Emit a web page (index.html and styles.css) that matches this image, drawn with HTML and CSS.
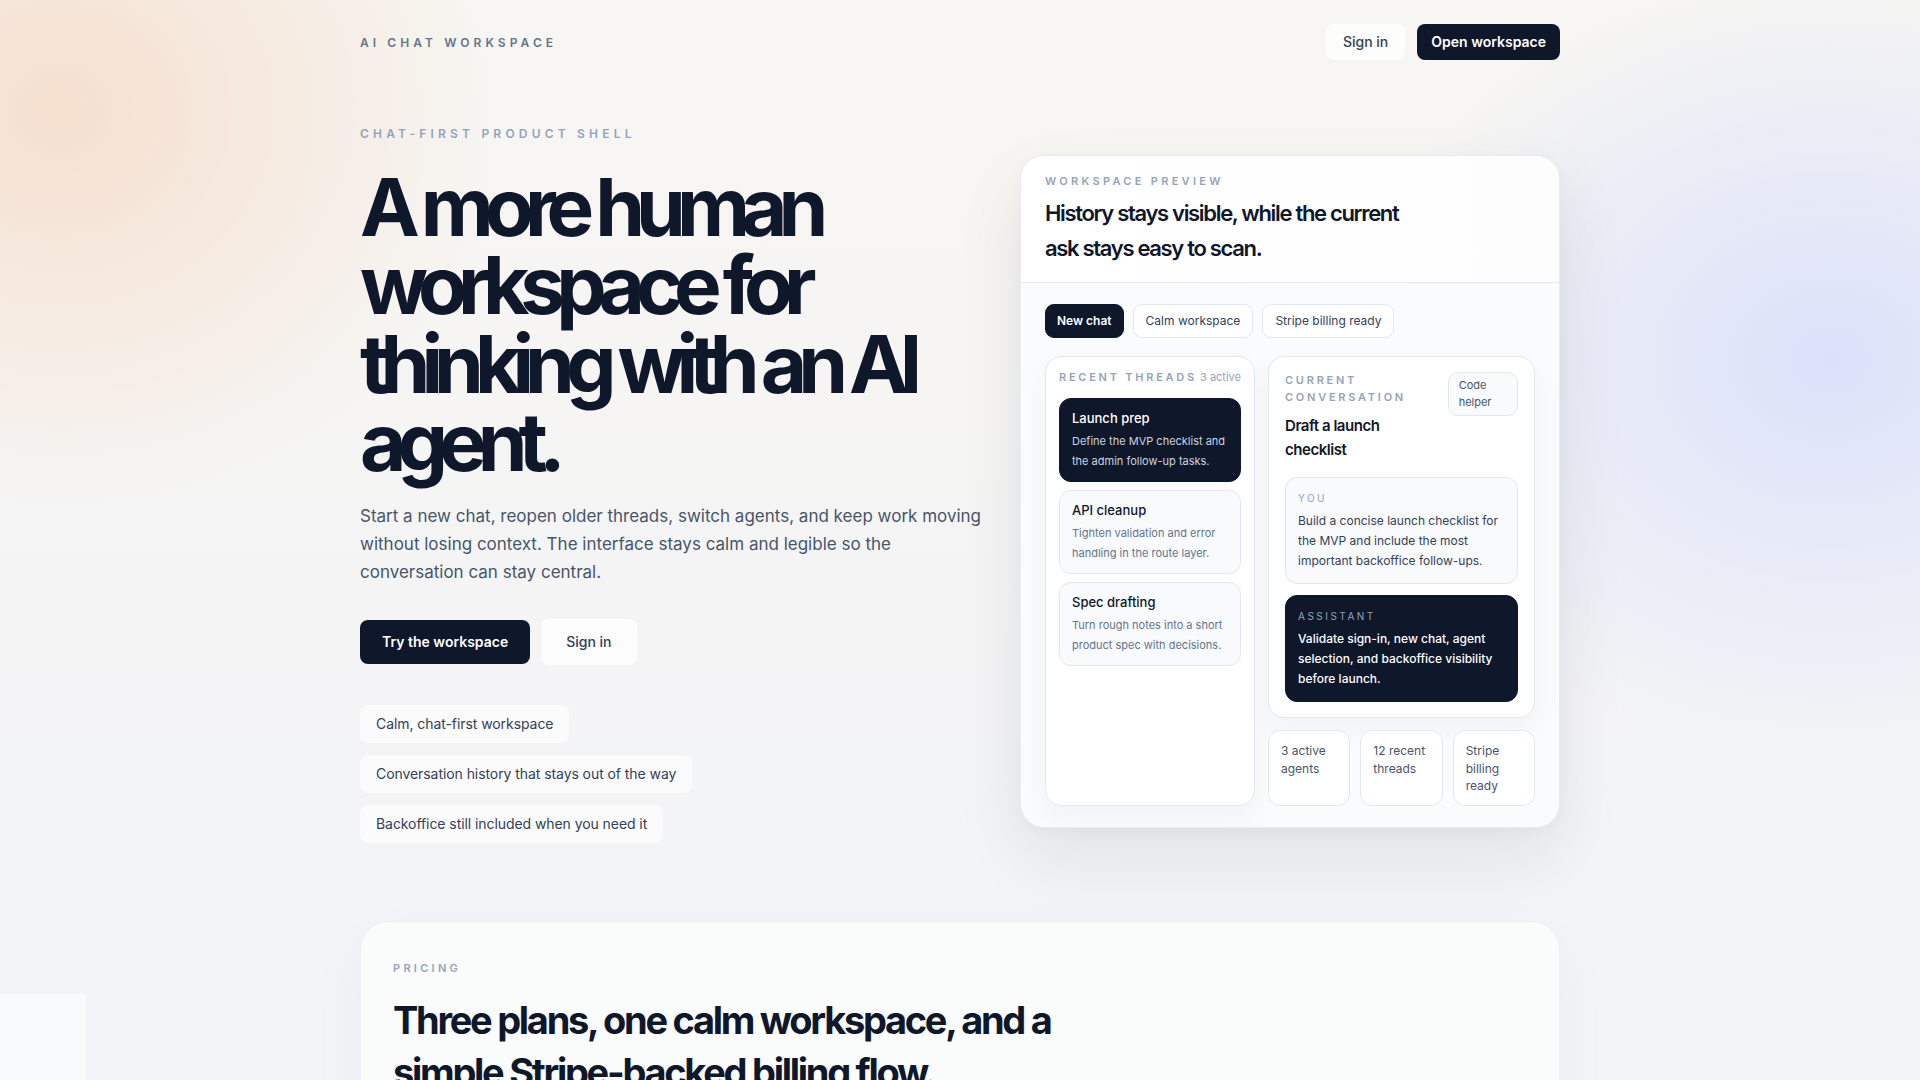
FILE: index.html
```html
<!DOCTYPE html>
<html lang="en">
<head>
<meta charset="utf-8">
<title>AI Chat Workspace</title>
<link rel="stylesheet" href="styles.css">
</head>
<body>
<div class="page">
  <header class="nav">
    <div class="brand">AI CHAT WORKSPACE</div>
    <div class="nav-actions">
      <a class="btn btn-ghost" href="#">Sign in</a>
      <a class="btn btn-dark" href="#">Open workspace</a>
    </div>
  </header>

  <section class="hero">
    <div class="hero-copy">
      <p class="eyebrow">CHAT-FIRST PRODUCT SHELL</p>
      <h1 class="hero-title">A more human workspace for thinking with an AI agent.</h1>
      <p class="lead">Start a new chat, reopen older threads, switch agents, and keep work moving without losing context. The interface stays calm and legible so the conversation can stay central.</p>
      <div class="cta">
        <a class="btn btn-dark btn-lg" href="#">Try the workspace</a>
        <a class="btn btn-ghost btn-lg" href="#">Sign in</a>
      </div>
      <ul class="pills">
        <li class="pill">Calm, chat-first workspace</li>
        <li class="pill">Conversation history that stays out of the way</li>
        <li class="pill">Backoffice still included when you need it</li>
      </ul>
    </div>

    <div class="preview-col">
      <div class="preview">
        <div class="preview-head">
          <p class="micro">WORKSPACE PREVIEW</p>
          <h2 class="preview-title">History stays visible, while the current ask stays easy to scan.</h2>
        </div>
        <div class="preview-body">
          <div class="tabs">
            <span class="tab tab-active">New chat</span>
            <span class="tab">Calm workspace</span>
            <span class="tab">Stripe billing ready</span>
          </div>
          <div class="panels">
            <div class="threads">
              <div class="threads-head">
                <span class="micro">RECENT THREADS</span>
                <span class="threads-count">3 active</span>
              </div>
              <div class="thread thread-active">
                <div class="thread-title">Launch prep</div>
                <div class="thread-desc">Define the MVP checklist and the admin follow-up tasks.</div>
              </div>
              <div class="thread">
                <div class="thread-title">API cleanup</div>
                <div class="thread-desc">Tighten validation and error handling in the route layer.</div>
              </div>
              <div class="thread">
                <div class="thread-title">Spec drafting</div>
                <div class="thread-desc">Turn rough notes into a short product spec with decisions.</div>
              </div>
            </div>
            <div class="convo-col">
              <div class="convo">
                <div class="convo-head">
                  <div class="convo-heading">
                    <p class="micro">CURRENT CONVERSATION</p>
                    <h3 class="convo-title">Draft a launch checklist</h3>
                  </div>
                  <span class="badge">Code helper</span>
                </div>
                <div class="msg msg-user">
                  <div class="msg-label">YOU</div>
                  <p class="msg-text">Build a concise launch checklist for the MVP and include the most important backoffice follow-ups.</p>
                </div>
                <div class="msg msg-bot">
                  <div class="msg-label">ASSISTANT</div>
                  <p class="msg-text">Validate sign-in, new chat, agent selection, and backoffice visibility before launch.</p>
                </div>
              </div>
              <div class="stats">
                <div class="stat">3 active agents</div>
                <div class="stat">12 recent threads</div>
                <div class="stat">Stripe billing ready</div>
              </div>
            </div>
          </div>
        </div>
      </div>
    </div>
  </section>

  <section class="pricing">
    <p class="eyebrow eyebrow-sm">PRICING</p>
    <h2 class="pricing-title">Three plans, one calm workspace, and a simple Stripe-backed billing flow.</h2>
    <p class="pricing-lead">Start free, upgrade when the team needs more agents, and manage billing without leaving the workspace.</p>
  </section>
</div>
<div class="corner"></div>
</body>
</html>
```

FILE: styles.css
```css
* { box-sizing: border-box; }

html, body { margin: 0; padding: 0; }

body {
  font-family: Inter, "Noto Sans", "Liberation Sans", sans-serif;
  color: #0f172a;
  min-height: 100vh;
  background:
    radial-gradient(440px 400px at 60px 110px, rgba(245, 221, 203, 0.9), rgba(245, 221, 203, 0) 100%),
    radial-gradient(480px 400px at 1830px 360px, rgba(219, 225, 250, 1), rgba(219, 225, 250, 0) 100%),
    linear-gradient(180deg, #f7f6f2 0px, #f6f5f3 300px, #f3f4f7 900px, #f3f4f7 100%);
  background-repeat: no-repeat;
}

a { text-decoration: none; color: inherit; }

.page {
  width: 1200px;
  margin: 0 auto;
  padding-bottom: 120px;
}

/* NAV */
.nav {
  display: flex;
  align-items: center;
  justify-content: space-between;
  padding-top: 24px;
}

.brand {
  font-size: 12px;
  line-height: 18px;
  padding-top: 2px;
  font-weight: 600;
  letter-spacing: 0.34em;
  color: #64748b;
}

.nav-actions {
  display: flex;
  gap: 12px;
}

.btn {
  display: inline-flex;
  align-items: center;
  justify-content: center;
  height: 36px;
  padding: 0 16px;
  border-radius: 8px;
  font-size: 14px;
  font-weight: 500;
  line-height: 20px;
}

.btn-ghost {
  background: rgba(255, 255, 255, 0.72);
  color: #334155;
  border: 1px solid rgba(255, 255, 255, 0.6);
}

.btn-dark {
  background: #0f172a;
  color: #ffffff;
  font-weight: 600;
  padding: 0 14px;
}

.btn-lg {
  height: 44px;
  padding: 0 22px;
  font-size: 14px;
}

.btn-ghost.btn-lg {
  height: 46px;
  padding: 0 24px;
  font-weight: 500;
}

/* HERO */
.hero {
  display: grid;
  grid-template-columns: minmax(0, 1fr) 540px;
  column-gap: 20px;
  align-items: start;
  margin-top: 65px;
}

.eyebrow {
  margin: 0;
  font-size: 12px;
  line-height: 18px;
  font-weight: 600;
  letter-spacing: 0.35em;
  color: #94a3b8;
}

.hero-title {
  margin: 25px 0 0;
  font-size: 80px;
  line-height: 0.98;
  font-weight: 700;
  letter-spacing: -0.112em;
  color: #0f172a;
}

.lead {
  margin: 20px 0 0;
  max-width: 628px;
  font-size: 17px;
  line-height: 28.2px;
  color: #475569;
}

.cta {
  display: flex;
  align-items: center;
  gap: 11px;
  margin-top: 33px;
}

.pills {
  list-style: none;
  margin: 40px 0 0;
  padding: 0;
  display: flex;
  flex-direction: column;
  align-items: flex-start;
  gap: 12px;
}

.pill {
  padding: 9px 16px 10px;
  font-size: 14px;
  line-height: 19px;
  letter-spacing: -0.005em;
  color: #334155;
  background: rgba(255, 255, 255, 0.62);
  border-radius: 8px;
}

/* PREVIEW */
.preview-col {
  padding-top: 30px;
}

.preview {
  border-radius: 24px;
  border: 1px solid rgba(226, 232, 240, 0.8);
  background: #fafbfc;
  box-shadow: 0 30px 70px rgba(15, 23, 42, 0.08), 0 4px 14px rgba(15, 23, 42, 0.03);
  overflow: hidden;
}

.preview-head {
  padding: 17px 24px 16px;
  background: linear-gradient(90deg, #ffffff 0%, #fdfdfd 100%);
  border-bottom: 1px solid #e6eaf0;
}

.micro {
  margin: 0;
  font-size: 11px;
  line-height: 16px;
  font-weight: 600;
  letter-spacing: 0.3em;
  color: #94a3b8;
}

.preview-title {
  margin: 7px 0 0;
  max-width: 390px;
  font-size: 22px;
  line-height: 35.2px;
  font-weight: 600;
  letter-spacing: -0.06em;
  color: #0f172a;
}

.preview-body {
  padding: 21px 24px 21px;
}

.tabs {
  display: flex;
  gap: 9px;
}

.tab {
  padding: 7px 12px;
  font-size: 12px;
  line-height: 18px;
  color: #334155;
  background: #ffffff;
  border: 1px solid #e2e8f0;
  border-radius: 9px;
}

.tab-active {
  background: #0f172a;
  border-color: #0f172a;
  color: #ffffff;
  font-weight: 600;
  padding: 7px 11px;
}

.panels {
  display: grid;
  grid-template-columns: 210px minmax(0, 1fr);
  gap: 13px;
  margin-top: 18px;
}

.threads {
  background: #ffffff;
  border: 1px solid #e2e8f0;
  border-radius: 16px;
  padding: 12px 13px;
  display: flex;
  flex-direction: column;
  gap: 8px;
  box-shadow: 0 12px 30px rgba(15, 23, 42, 0.04);
}

.threads-head {
  display: flex;
  align-items: center;
  justify-content: space-between;
  margin-bottom: 5px;
}

.threads-head .micro {
  letter-spacing: 0.25em;
}

.threads-count {
  font-size: 11px;
  line-height: 16px;
  color: #94a3b8;
}

.thread {
  padding: 9px 12px 10px;
  border: 1px solid #e2e8f0;
  border-radius: 12px;
  background: #f8fafc;
}

.thread-active {
  background: #0f172a;
  border-color: #0f172a;
}

.thread-title {
  font-size: 13px;
  line-height: 20px;
  font-weight: 500;
  color: #0f172a;
}

.thread-desc {
  margin-top: 3px;
  font-size: 11px;
  line-height: 20px;
  color: #64748b;
}

.thread-active .thread-title { color: #ffffff; }
.thread-active .thread-desc { color: #cbd5e1; }

.convo-col {
  display: flex;
  flex-direction: column;
  gap: 12px;
}

.convo {
  background: #ffffff;
  border: 1px solid #e2e8f0;
  border-radius: 16px;
  padding: 15px 16px 15px;
  box-shadow: 0 12px 30px rgba(15, 23, 42, 0.04);
}

.convo-head {
  display: flex;
  justify-content: space-between;
  align-items: flex-start;
  gap: 12px;
}

.convo-heading .micro {
  line-height: 17px;
  letter-spacing: 0.25em;
}

.convo-title {
  margin: 8px 0 0;
  font-size: 15px;
  line-height: 24px;
  font-weight: 600;
  letter-spacing: -0.03em;
  color: #0f172a;
}

.badge {
  padding: 4px 10px;
  font-size: 11px;
  line-height: 17px;
  color: #475569;
  background: #f8fafc;
  border: 1px solid #e2e8f0;
  border-radius: 10px;
}

.msg {
  border-radius: 12px;
  padding: 13px 12px 12px;
}

.msg-user {
  margin-top: 15px;
  background: #f8fafc;
  border: 1px solid #e2e8f0;
}

.msg-bot {
  margin-top: 11px;
  background: #0f172a;
  border: 1px solid #0f172a;
}

.msg-label {
  font-size: 10px;
  line-height: 14px;
  letter-spacing: 0.25em;
  color: #94a3b8;
}

.msg-text {
  margin: 6px 0 0;
  font-size: 12px;
  line-height: 20px;
  color: #334155;
}

.msg-bot .msg-text {
  color: #ffffff;
  font-weight: 500;
}

.stats {
  display: grid;
  grid-template-columns: repeat(3, minmax(0, 1fr));
  gap: 10px;
}

.stat {
  padding: 11px 12px 10px;
  font-size: 12px;
  line-height: 17.5px;
  color: #475569;
  background: #ffffff;
  border: 1px solid #e2e8f0;
  border-radius: 12px;
}

/* PRICING */
.pricing {
  margin-top: 78px;
  padding: 38px 32px 48px;
  border-radius: 28px;
  background: rgba(250, 251, 252, 0.85);
  border: 1px solid rgba(235, 238, 243, 0.9);
  box-shadow: 0 20px 60px rgba(15, 23, 42, 0.04);
}

.eyebrow-sm {
  font-size: 11px;
  line-height: 16px;
  letter-spacing: 0.3em;
}

.pricing-title {
  margin: 18px 0 0;
  max-width: 720px;
  font-size: 38px;
  line-height: 52px;
  font-weight: 700;
  letter-spacing: -0.06em;
  color: #0f172a;
}

.pricing-lead {
  margin: 16px 0 0;
  max-width: 620px;
  font-size: 16px;
  line-height: 26px;
  color: #475569;
}

.corner {
  position: fixed;
  left: 0;
  bottom: 0;
  width: 86px;
  height: 86px;
  background: #f8fafc;
}
```
